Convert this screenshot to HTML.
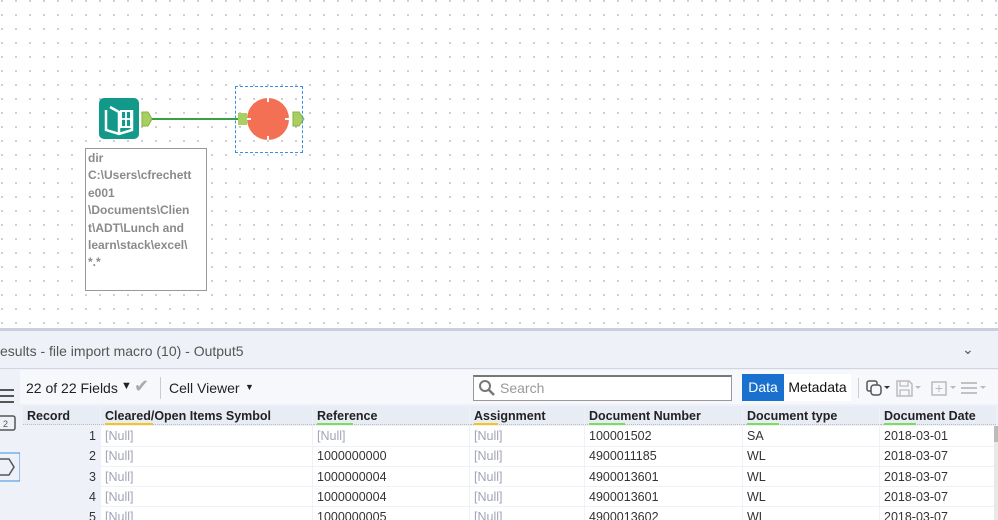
<!DOCTYPE html>
<html><head><meta charset="utf-8"><style>
*{margin:0;padding:0;box-sizing:border-box}
html,body{width:998px;height:520px;overflow:hidden}
body{font-family:"Liberation Sans",sans-serif;background:#fff;position:relative}
.canvas{position:absolute;left:0;top:0;width:998px;height:328px;background-color:#fff;background-image:radial-gradient(circle,#a8adb5 0.7px,transparent 1px);background-size:14px 14px;background-position:-5px -6px}
.abs{position:absolute}
.panel{position:absolute;left:0;top:328px;width:998px;height:192px;background:#eef1f7;border-top:3px solid #c8cfdf}
.tb{position:absolute;left:20px;top:370px;width:978px;height:34px;background:#f6f8fc}
table{position:absolute;left:22px;top:405px;border-collapse:separate;border-spacing:1px 1px;font-size:12.5px;table-layout:fixed}
td,th{height:19.3px;padding:0 4px;white-space:nowrap;overflow:hidden}
th{background:#e8ecf5;text-align:left;font-weight:bold;color:#222;position:relative}
td{background:#fff;color:#333}
td.r{background:#eef1f7;text-align:right}
.n{color:#a0a4b8}
th:after{content:"";position:absolute;left:0;right:0;bottom:0;border-bottom:1px dotted #bbb}
th span{position:absolute;left:4px;bottom:0;height:2px;z-index:2}
</style></head><body>
<div class="canvas"></div>
<div class="abs" style="left:99px;top:98px;width:40px;height:41px;background:#13998a;border-radius:5px"></div>
<svg class="abs" style="left:99px;top:98px" width="40" height="41" viewBox="0 0 40 41"><path d="M7 12 L7 32 L20 36 L33 32 L33 12" fill="none" stroke="#fff" stroke-width="2.5"/><path d="M20 36 L20 14 L11 9" fill="none" stroke="#fff" stroke-width="2.5"/><rect x="22" y="13" width="10" height="16" fill="none" stroke="#fff" stroke-width="2"/><path d="M27 13v16M22 21h10" stroke="#fff" stroke-width="1.8"/></svg>
<svg class="abs" style="left:140px;top:109px" width="170" height="20"><path d="M2 3h6l4 7-4 7H2z" fill="#a8d060" stroke="#8ab040"/><line x1="12" y1="10" x2="100" y2="10" stroke="#3aa040" stroke-width="2"/><rect x="98" y="4" width="9" height="12" fill="#a8d060"/><path d="M153 3h6l5 7-5 7h-6z" fill="#a8d060" stroke="#8ab040"/></svg>
<div class="abs" style="left:235px;top:86px;width:68px;height:67px;border:1px dashed #3b8fe0"></div>
<svg class="abs" style="left:246px;top:97px" width="44" height="44"><circle cx="22" cy="22" r="21" fill="#f47055"/><path d="M22 1v4M22 39v4M1 22h4M39 22h4" stroke="#fff" stroke-width="2"/></svg>
<div class="abs" style="left:85px;top:148px;width:122px;height:143px;border:1.5px solid #999;background:#fff;font-weight:bold;font-size:12px;color:#8a8a8a;line-height:17.4px;padding:1px 0 0 2px">dir<br>C:\Users\cfrechett<br>e001<br>\Documents\Clien<br>t\ADT\Lunch and<br>learn\stack\excel\<br>*.*</div>
<div class="panel"></div>
<div class="abs" style="left:0;top:343px;font-size:14px;color:#555">esults - file import macro (10) - Output5</div>
<div class="abs" style="left:962px;top:341px;font-size:14px;color:#555">⌄</div>
<div class="abs" style="left:0;top:368px;width:998px;height:1px;background:#d0d5e0"></div>
<div class="tb"></div>
<svg class="abs" style="left:0;top:385px" width="20" height="100"><path d="M0 5h14M0 11h14M0 17h14" stroke="#555" stroke-width="2"/><rect x="-2" y="31" width="17" height="14" rx="2" fill="none" stroke="#555" stroke-width="1.5"/><text x="3" y="42" font-size="9" fill="#555">2</text><rect x="-2" y="68" width="22" height="28" fill="none" stroke="#3b8fe0"/><path d="M-2 74h11l5 8-5 8H-2" fill="none" stroke="#555" stroke-width="1.5"/></svg>
<div class="abs" style="left:26px;top:380px;font-size:14px;color:#222">22 of 22 Fields</div>
<div class="abs" style="left:121px;top:380px;font-size:11px;color:#222">▼</div>
<div class="abs" style="left:134px;top:376px;font-size:18px;color:#aaa">✔</div>
<div class="abs" style="left:160px;top:377px;width:1px;height:22px;background:#ccc"></div>
<div class="abs" style="left:169px;top:380px;font-size:14px;color:#222">Cell Viewer</div>
<div class="abs" style="left:245px;top:382px;font-size:9px;color:#222">▼</div>
<div class="abs" style="left:473px;top:375px;width:259px;height:26px;background:#fff;border:1px solid #999;border-top:2px solid #777"></div>
<svg class="abs" style="left:478px;top:379px" width="18" height="18"><circle cx="7" cy="7" r="5" fill="none" stroke="#777" stroke-width="2"/><path d="M11 11l5 5" stroke="#777" stroke-width="2.5"/></svg>
<div class="abs" style="left:500px;top:380px;font-size:14px;color:#999">Search</div>
<div class="abs" style="left:742px;top:374px;width:42px;height:27px;background:#1a70cf;color:#fff;font-size:14px;text-align:center;line-height:27px">Data</div>
<div class="abs" style="left:784px;top:374px;width:67px;height:27px;background:#fff;color:#111;font-size:14px;text-align:center;line-height:27px">Metadata</div>
<div class="abs" style="left:858px;top:378px;width:1px;height:20px;background:#ccc"></div>
<svg class="abs" style="left:864px;top:378px" width="134" height="22"><rect x="3" y="3" width="10" height="10" rx="2" fill="none" stroke="#555" stroke-width="1.5"/><rect x="7" y="7" width="10" height="10" rx="3" fill="#f6f8fc" stroke="#555" stroke-width="1.5"/><path d="M20 8l3 3 3-3z" fill="#333"/><path d="M33 3h12l3 3v12H33z" fill="none" stroke="#bbb" stroke-width="1.5"/><path d="M36 3v5h8V3M36 18v-6h9v6" fill="none" stroke="#bbb" stroke-width="1.3"/><path d="M51 8l3 3 3-3z" fill="#bbb"/><rect x="68" y="4" width="14" height="13" fill="none" stroke="#bbb" stroke-width="1.5"/><path d="M75 7v7M71.5 10.5h7" stroke="#bbb"/><path d="M86 8l3 3 3-3z" fill="#bbb"/><path d="M97 5h16M97 10h16M97 15h16" stroke="#bbb" stroke-width="1.8"/><path d="M116 8l3 3 3-3z" fill="#bbb"/></svg>
<table>
<colgroup><col style="width:77px"><col style="width:211px"><col style="width:156px"><col style="width:114px"><col style="width:157px"><col style="width:136px"><col style="width:116px"></colgroup>
<tr><th>Record</th><th>Cleared/Open Items Symbol<span style="width:48px;background:#f5c518"></span></th><th>Reference<span style="width:36px;background:#7ddc5a"></span></th><th>Assignment<span style="width:24px;background:#f5c518"></span></th><th>Document Number<span style="width:36px;background:#7ddc5a"></span></th><th>Document type<span style="width:32px;background:#7ddc5a"></span></th><th>Document Date<span style="width:32px;background:#7ddc5a"></span></th></tr>
<tr><td class="r">1</td><td class="n">[Null]</td><td class="n">[Null]</td><td class="n">[Null]</td><td>100001502</td><td>SA</td><td>2018-03-01</td></tr>
<tr><td class="r">2</td><td class="n">[Null]</td><td>1000000000</td><td class="n">[Null]</td><td>4900011185</td><td>WL</td><td>2018-03-07</td></tr>
<tr><td class="r">3</td><td class="n">[Null]</td><td>1000000004</td><td class="n">[Null]</td><td>4900013601</td><td>WL</td><td>2018-03-07</td></tr>
<tr><td class="r">4</td><td class="n">[Null]</td><td>1000000004</td><td class="n">[Null]</td><td>4900013601</td><td>WL</td><td>2018-03-07</td></tr>
<tr><td class="r">5</td><td class="n">[Null]</td><td>1000000005</td><td class="n">[Null]</td><td>4900013602</td><td>WL</td><td>2018-03-07</td></tr>
</table>
<div class="abs" style="left:994px;top:426px;width:4px;height:94px;background:#e8e8e8"></div>
<div class="abs" style="left:994px;top:426px;width:4px;height:16px;background:#bbb"></div>
</body></html>
